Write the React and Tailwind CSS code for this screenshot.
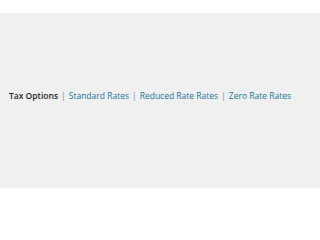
export default function App() {
  const links = ['Standard Rates', 'Reduced Rate Rates', 'Zero Rate Rates']
  return (
    <div className="w-full min-w-[300px] h-[200px] bg-white pt-[13px] overflow-hidden" style={{ fontFamily: '"Open Sans", sans-serif' }}>
      <div className="h-[175px] bg-[#f0f0f0] flex items-center px-[9px]">
        <ul className="flex items-center text-[8.5px] text-[#666] whitespace-nowrap -mt-[9px]">
          <li className="font-semibold text-[#23282d]">Tax Options</li>
          {links.map((l) => (
            <li key={l} className="flex items-center">
              <span className="mx-[3px] text-[#888]">|</span>
              <a className="text-[#21759b]">{l}</a>
            </li>
          ))}
        </ul>
      </div>
    </div>
  )
}
